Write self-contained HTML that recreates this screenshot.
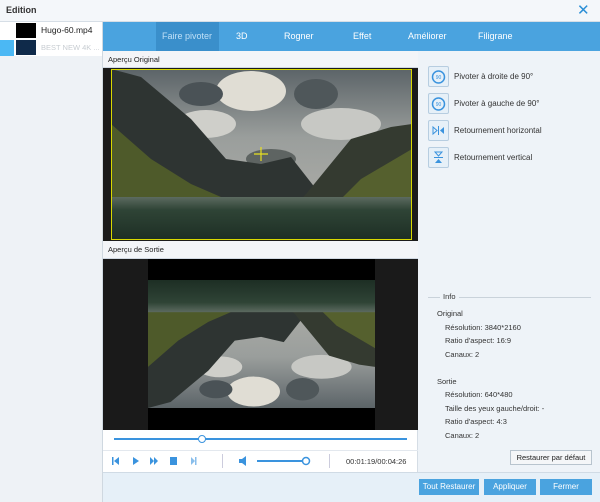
<!DOCTYPE html>
<html><head><meta charset="utf-8"><style>
*{margin:0;padding:0;box-sizing:border-box}
body{width:600px;height:502px;overflow:hidden;font-family:"Liberation Sans",sans-serif;font-size:8px;color:#222;background:#eef3f8;position:relative}
.a{position:absolute}
.ib{position:absolute;left:428px;width:21px;height:21px;border:1px solid #b7cde0;background:#e6f0f8;border-radius:2px}
.il{position:absolute;left:454px;font-size:8px;color:#333}
.btn{position:absolute;top:479px;height:16px;background:#4aa3df;color:#fff;font-size:8px;text-align:center;line-height:16px}
</style></head><body>
<div class="a" style="left:0;top:0;width:600px;height:22px;background:#f4f7fa;border-bottom:1px solid #d6dee6"></div>
<div class="a" style="left:6px;top:5px;font-weight:bold;font-size:9px;color:#333">Edition</div>
<div class="a" style="left:577px;top:1px;font-size:15px;color:#2b8fd6">✕</div>
<div class="a" style="left:0;top:22px;width:103px;height:480px;background:#eef2f6;border-right:1px solid #cfd8e0"></div>
<div class="a" style="left:0;top:22px;width:102px;height:34px;background:#fff"></div>
<div class="a" style="left:16px;top:23px;width:20px;height:15px;background:#000"></div>
<div class="a" style="left:41px;top:25px;font-size:8.5px;color:#222">Hugo-60.mp4</div>
<div class="a" style="left:0;top:40px;width:14px;height:16px;background:#4bb8f4"></div>
<div class="a" style="left:16px;top:40px;width:20px;height:15px;background:#0f2a4a"></div>
<div class="a" style="left:41px;top:43px;font-size:7.5px;color:#c8cdd2">BEST NEW 4K ...</div>
<div class="a" style="left:103px;top:22px;width:497px;height:29px;background:#4aa3df"></div>
<div class="a" style="left:156px;top:22px;width:63px;height:29px;background:#3a8fcb"></div>
<div class="a" style="top:31px;left:162px;color:#bfe0f7;font-size:9px">Faire pivoter</div>
<div class="a" style="top:31px;left:236px;color:#fff;font-size:9px">3D</div>
<div class="a" style="top:31px;left:284px;color:#fff;font-size:9px">Rogner</div>
<div class="a" style="top:31px;left:353px;color:#fff;font-size:9px">Effet</div>
<div class="a" style="top:31px;left:408px;color:#fff;font-size:9px">Améliorer</div>
<div class="a" style="top:31px;left:478px;color:#fff;font-size:9px">Filigrane</div>
<div class="a" style="left:103px;top:51px;width:315px;height:421px;background:#fff;border-right:1px solid #d5dde5"></div>
<div class="a" style="left:103px;top:51px;width:315px;height:17px;background:#f3f5f8;border-bottom:1px solid #d0d8e2"></div>
<div class="a" style="left:108px;top:55px;font-size:7.5px">Aperçu Original</div>
<div class="a" style="left:103px;top:68px;width:315px;height:173px;background:#1b1b1b"></div>
<svg class="a" style="left:111px;top:69px" width="301" height="171" viewBox="0 0 301 171">
<defs><linearGradient id="sk" x1="0" y1="0" x2="0" y2="1"><stop offset="0" stop-color="#5c6468"/><stop offset=".4" stop-color="#9a9e9c"/><stop offset="1" stop-color="#b4b3ac"/></linearGradient>
<linearGradient id="wt" x1="0" y1="0" x2="0" y2="1"><stop offset="0" stop-color="#5c6a60"/><stop offset=".3" stop-color="#2f4436"/><stop offset="1" stop-color="#1d2e24"/></linearGradient></defs>
<rect width="301" height="171" fill="url(#sk)"/>
<ellipse cx="140" cy="22" rx="35" ry="20" fill="#e0ddd4"/>
<ellipse cx="95" cy="55" rx="30" ry="14" fill="#cfcfca"/><ellipse cx="230" cy="55" rx="40" ry="16" fill="#c7c8c4"/>
<ellipse cx="90" cy="25" rx="22" ry="12" fill="#4a5256"/><ellipse cx="205" cy="25" rx="22" ry="15" fill="#4f575a"/><ellipse cx="160" cy="90" rx="25" ry="10" fill="#5e6462"/>
<polygon points="0,0 30,8 80,50 115,90 150,95 180,88 205,120 220,130 0,130" fill="#2e3432"/>
<polygon points="0,55 40,90 80,115 110,128 0,130" fill="#4e5a2a"/>
<polygon points="195,125 240,70 280,58 301,55 301,130 190,130" fill="#343a30"/>
<polygon points="250,110 301,80 301,130 230,130" fill="#55602e"/>
<rect y="128" width="301" height="43" fill="url(#wt)"/>
<rect x="0.5" y="0.5" width="300" height="170" fill="none" stroke="#d8d800" stroke-width="1"/>
<path d="M150 78v14M143 85h14" stroke="#e8e020" stroke-width="1.2"/>
</svg>
<div class="a" style="left:103px;top:241px;width:315px;height:18px;background:#f3f5f8;border-bottom:1px solid #d0d8e2"></div>
<div class="a" style="left:108px;top:245px;font-size:7.5px">Aperçu de Sortie</div>
<div class="a" style="left:103px;top:259px;width:315px;height:171px;background:#1a1a1a"></div>
<div class="a" style="left:148px;top:259px;width:227px;height:171px;background:#000"></div>
<svg class="a" style="left:148px;top:280px" width="227" height="128" viewBox="0 0 301 171" preserveAspectRatio="none">
<g transform="translate(0,171) scale(1,-1)">
<rect width="301" height="171" fill="url(#sk)"/>
<ellipse cx="140" cy="22" rx="35" ry="20" fill="#e0ddd4"/>
<ellipse cx="95" cy="55" rx="30" ry="14" fill="#cfcfca"/><ellipse cx="230" cy="55" rx="40" ry="16" fill="#c7c8c4"/>
<ellipse cx="90" cy="25" rx="22" ry="12" fill="#4a5256"/><ellipse cx="205" cy="25" rx="22" ry="15" fill="#4f575a"/>
<polygon points="0,0 30,8 80,50 115,90 150,95 180,88 205,120 220,130 0,130" fill="#2e3432"/>
<polygon points="0,55 40,90 80,115 110,128 0,130" fill="#4e5a2a"/>
<polygon points="195,125 240,70 280,58 301,55 301,130 190,130" fill="#343a30"/>
<polygon points="250,110 301,80 301,130 230,130" fill="#55602e"/>
<rect y="128" width="301" height="43" fill="url(#wt)"/>
</g></svg>
<div class="a" style="left:114px;top:438px;width:293px;height:2px;background:#3a93de"></div>
<div class="a" style="left:198px;top:435px;width:8px;height:8px;border-radius:50%;background:#fff;border:1.5px solid #3a93de"></div>
<div class="a" style="left:103px;top:450px;width:315px;height:1px;background:#e3e8ee"></div>
<svg class="a" style="left:103px;top:452px" width="315" height="20">
<g fill="#3a93de">
<rect x="9" y="5" width="1.5" height="8"/><polygon points="16,5 16,13 11,9"/>
<polygon points="30,5 30,13 36,9"/>
<polygon points="47,5 47,13 51,9"/><polygon points="51,5 51,13 55,9"/>
<rect x="67" y="5" width="7" height="8"/>
<polygon points="88,5 88,13 92,9" opacity=".6"/><rect x="92" y="5" width="1.5" height="8" opacity=".6"/>
<rect x="136" y="7" width="3" height="4"/><polygon points="139,7 143,4 143,14 139,11"/>
</g>
<rect x="119" y="2" width="1" height="14" fill="#ccd"/><rect x="226" y="2" width="1" height="14" fill="#ccd"/>
<rect x="154" y="8" width="50" height="2" fill="#3a93de"/>
<circle cx="203" cy="9" r="3.5" fill="#fff" stroke="#3a93de" stroke-width="1.5"/>
</svg>
<div class="a" style="left:346px;top:457px;font-size:7.5px;color:#333">00:01:19/00:04:26</div>
<div class="ib" style="top:66px"><svg width="19" height="19"><circle cx="9.5" cy="10" r="6" fill="none" stroke="#3a93de" stroke-width="1.5"/><text x="9.5" y="12" font-size="5" text-anchor="middle" fill="#3a93de">90</text></svg></div>
<div class="il" style="top:72px">Pivoter à droite de 90°</div>
<div class="ib" style="top:93px"><svg width="19" height="19"><circle cx="9.5" cy="10" r="6" fill="none" stroke="#3a93de" stroke-width="1.5"/><text x="9.5" y="12" font-size="5" text-anchor="middle" fill="#3a93de">90</text></svg></div>
<div class="il" style="top:99px">Pivoter à gauche de 90°</div>
<div class="ib" style="top:120px"><svg width="19" height="19"><polygon points="4,6 4,13 8,9.5" fill="none" stroke="#3a93de"/><rect x="9" y="5" width="1" height="9" fill="#3a93de"/><polygon points="15,6 15,13 11,9.5" fill="#3a93de"/></svg></div>
<div class="il" style="top:126px">Retournement horizontal</div>
<div class="ib" style="top:147px"><svg width="19" height="19"><polygon points="6,4 13,4 9.5,8" fill="none" stroke="#3a93de"/><rect x="5" y="9" width="9" height="1" fill="#3a93de"/><polygon points="6,15 13,15 9.5,11" fill="#3a93de"/></svg></div>
<div class="il" style="top:153px">Retournement vertical</div>
<div class="a" style="left:428px;top:297px;width:163px;height:1px;background:#c9d2da"></div>
<div class="a" style="left:440px;top:292px;padding:0 3px;background:#eef3f8;font-size:7.5px;color:#333">Info</div>
<div class="a" style="left:437px;top:307px;font-size:7.5px;line-height:13.5px;color:#333">Original<br><span style="padding-left:8px">Résolution: 3840*2160</span><br><span style="padding-left:8px">Ratio d'aspect: 16:9</span><br><span style="padding-left:8px">Canaux: 2</span><br><br>Sortie<br><span style="padding-left:8px">Résolution: 640*480</span><br><span style="padding-left:8px">Taille des yeux gauche/droit: -</span><br><span style="padding-left:8px">Ratio d'aspect: 4:3</span><br><span style="padding-left:8px">Canaux: 2</span></div>
<div class="a" style="left:510px;top:450px;width:82px;height:15px;border:1px solid #b8c4ce;background:#f4f6f8;font-size:7.5px;text-align:center;line-height:13px">Restaurer par défaut</div>
<div class="a" style="left:103px;top:472px;width:497px;height:30px;background:#e6f0f8;border-top:1px solid #d0dbe5"></div>
<div class="btn" style="left:419px;width:60px">Tout Restaurer</div>
<div class="btn" style="left:484px;width:52px">Appliquer</div>
<div class="btn" style="left:540px;width:52px">Fermer</div>
</body></html>
